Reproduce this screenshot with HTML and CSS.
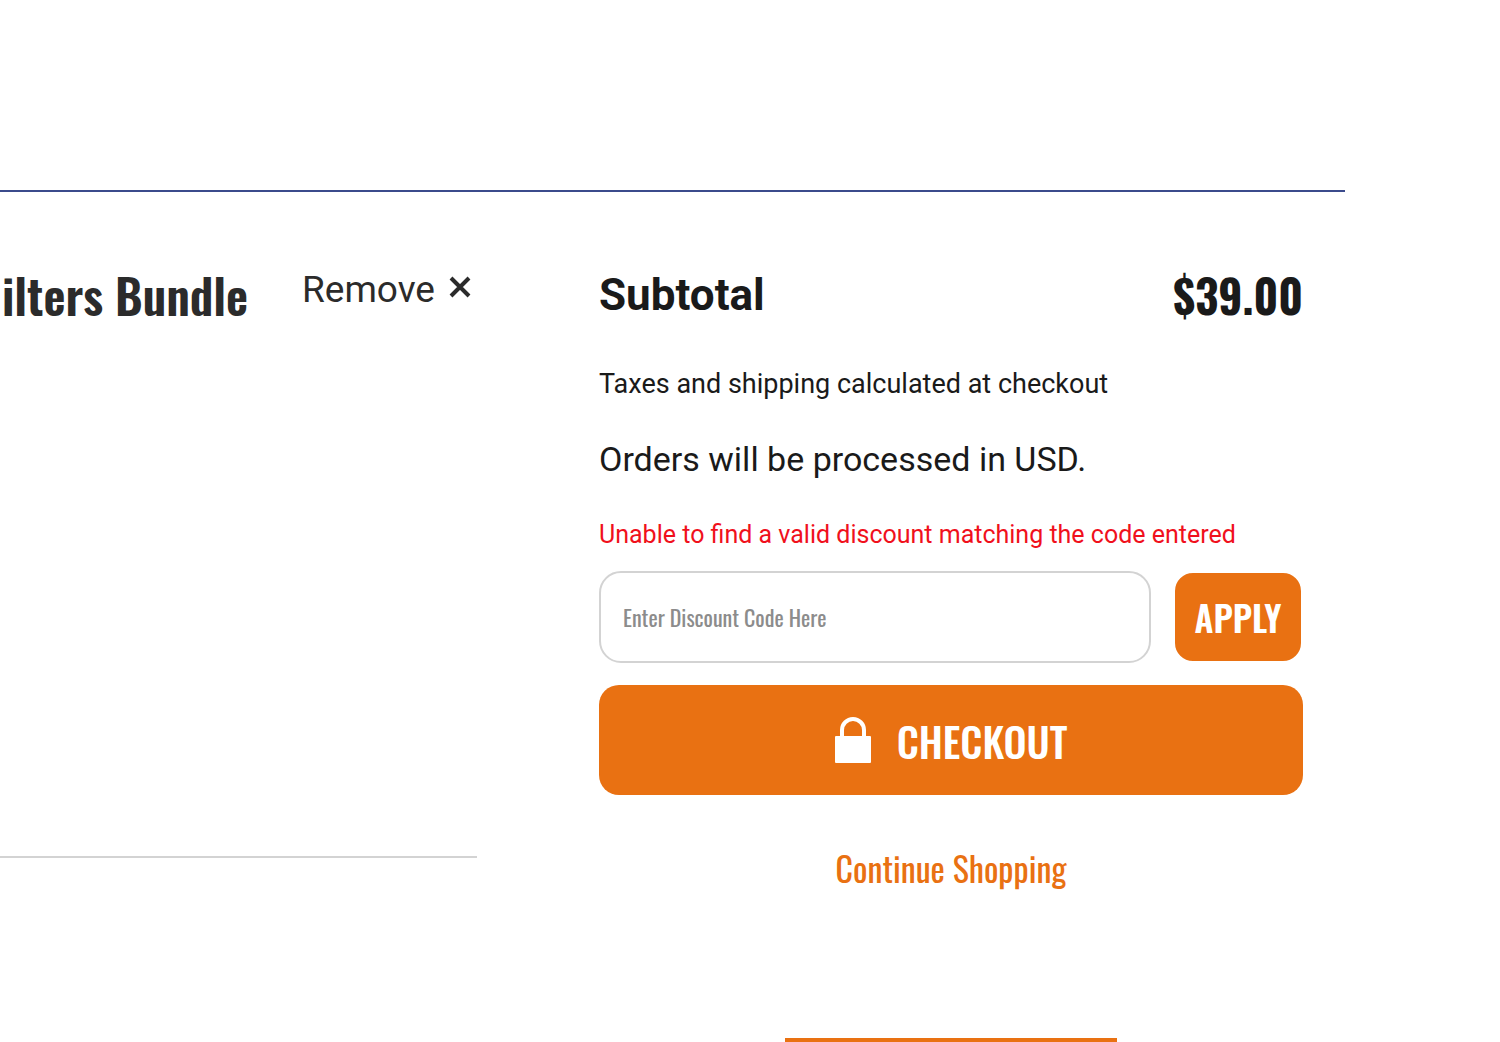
FILE: index.html
```html
<!DOCTYPE html>
<html lang="en">
<head>
<meta charset="UTF-8">
<meta name="viewport" content="width=device-width, initial-scale=1.0">
<title>Cart</title>
<link rel="stylesheet" href="styles.css">
</head>
<body>

<main class="cart">
    <section class="cart-item">
        <h2 class="item-title">ilters Bundle</h2>
        <button type="button" class="remove">
            Remove
            <svg class="remove-icon" viewBox="0 0 22 22" aria-hidden="true">
                <path d="M2 2L20 20M20 2L2 20" fill="none" stroke="currentColor" stroke-width="4"/>
            </svg>
        </button>
    </section>

    <section class="summary">
        <div class="subtotal">
            <h2 class="subtotal-label">Subtotal</h2>
            <span class="subtotal-price">$39.00</span>
        </div>
        <p class="taxes">Taxes and shipping calculated at checkout</p>
        <p class="currency">Orders will be processed in USD.</p>
        <form class="checkout-form">
            <p class="error" id="discount-error">Unable to find a valid discount matching the code entered</p>
            <div class="discount">
                <input type="text" id="discount" class="discount-input" placeholder="Enter Discount Code Here" aria-label="Discount code" aria-describedby="discount-error">
                <button type="button" class="apply">APPLY</button>
            </div>
            <button type="submit" class="checkout">
                <svg class="lock-icon" viewBox="0 0 36 46" aria-hidden="true">
                    <path d="M7 22V13a11 11 0 0 1 22 0v9" fill="none" stroke="currentColor" stroke-width="4"/>
                    <rect x="0" y="19" width="36" height="27" rx="1" fill="currentColor"/>
                </svg>
                CHECKOUT
            </button>
        </form>
        <a href="#" class="continue">Continue Shopping</a>
        <div class="bottom-bar"></div>
    </section>
</main>

</body>
</html>
```

FILE: styles.css
```css
* {
    box-sizing: border-box;
}
body {
    font-family: Roboto, sans-serif;
    background-color: #fff;
    color: #1a1a1a;
    margin: 0;
    padding: 190px 155px 0 0;
}
h2, p {
    margin: 0;
}
button {
    border: none;
    cursor: pointer;
}
.cart {
    display: grid;
    grid-template-columns: 477fr 704fr;
    column-gap: 122px;
    align-items: start;
    padding: 76px 42px 0 0;
    border-top: 2px solid #3b4b8c;
}
.cart-item {
    display: flex;
    justify-content: space-between;
    align-items: flex-start;
    height: 590px;
    padding: 0 6px 0 2px;
    border-bottom: 2px solid #d3d3d3;
    color: #2b2b2b;
}
.item-title, .subtotal-price, .discount-input, .apply, .checkout, .continue {
    font-family: Oswald, "Roboto Condensed", "Liberation Sans Narrow", "Liberation Sans", sans-serif;
}
.item-title {
    font-size: 48px;
    font-weight: 600;
    line-height: 54px;
    white-space: nowrap;
}
.remove {
    display: flex;
    gap: 14px;
    padding: 0;
    background: none;
    color: inherit;
    font-family: inherit;
    font-size: 37px;
    line-height: 44px;
}
.remove-icon {
    width: 22px;
    height: 22px;
    margin-top: 8px;
}
.summary {
    display: flex;
    flex-direction: column;
}
.subtotal {
    display: flex;
    justify-content: space-between;
    margin-bottom: 42px;
    line-height: 54px;
}
.subtotal-label {
    font-size: 44px;
}
.subtotal-price {
    font-size: 45px;
    font-weight: bold;
}
.taxes {
    margin-bottom: 35px;
    font-size: 27px;
    line-height: 40px;
}
.currency {
    margin-bottom: 36px;
    font-size: 34px;
    line-height: 40px;
}
.error {
    margin-bottom: 16px;
    color: #f0101c;
    font-size: 25px;
    line-height: 40px;
}
.discount {
    display: flex;
    gap: 22px;
    margin-bottom: 22px;
}
.discount-input {
    flex: 1;
    min-width: 0;
    height: 92px;
    padding: 0 22px;
    border: 2px solid #d3d3d3;
    border-radius: 22px;
    font-size: 22px;
}
.discount-input::placeholder {
    color: #8c8c8c;
}
.apply, .checkout {
    background-color: #e97112;
    color: #fff;
}
.apply {
    width: 130px;
    padding: 0;
    border: 2px solid #fff;
    border-radius: 20px;
    font-size: 35px;
    font-weight: 600;
}
.checkout {
    display: flex;
    justify-content: center;
    align-items: center;
    gap: 26px;
    width: 100%;
    height: 110px;
    border-radius: 20px;
    font-size: 41px;
    font-weight: 500;
}
.lock-icon {
    width: 36px;
    height: 46px;
}
.continue {
    align-self: center;
    margin-top: 51px;
    color: #e97112;
    font-size: 34px;
    line-height: 44px;
    text-decoration: none;
}
.bottom-bar {
    align-self: center;
    width: 332px;
    height: 4px;
    margin-top: 148px;
    background-color: #e97112;
}
```
